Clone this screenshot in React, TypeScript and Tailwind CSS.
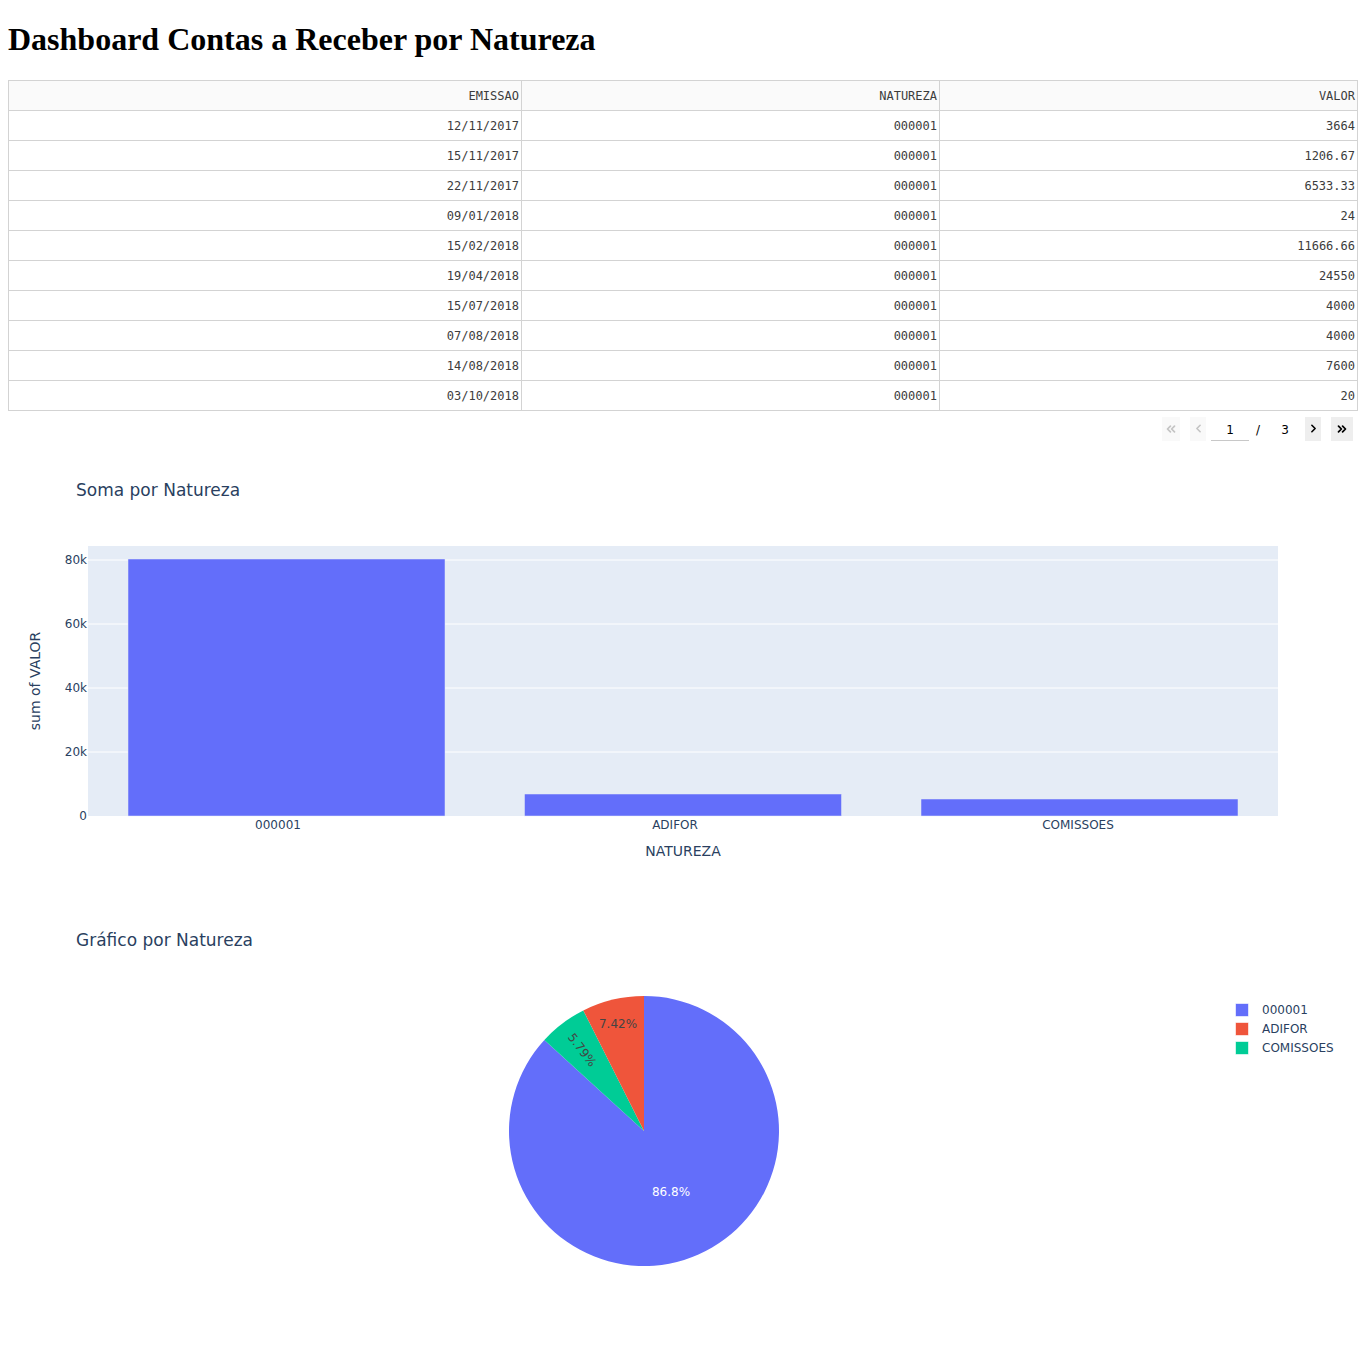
import { ChevronLeft, ChevronRight, ChevronsLeft, ChevronsRight } from 'lucide-react';

const rows = [
  ['12/11/2017', '000001', '3664'],
  ['15/11/2017', '000001', '1206.67'],
  ['22/11/2017', '000001', '6533.33'],
  ['09/01/2018', '000001', '24'],
  ['15/02/2018', '000001', '11666.66'],
  ['19/04/2018', '000001', '24550'],
  ['15/07/2018', '000001', '4000'],
  ['07/08/2018', '000001', '4000'],
  ['14/08/2018', '000001', '7600'],
  ['03/10/2018', '000001', '20'],
];

const plotFont = { fontFamily: '"DejaVu Sans", Verdana, Arial, sans-serif' };

function DataTable() {
  const cell = 'h-[30px] border border-[#d3d3d3] px-[2px] text-right align-middle';
  return (
    <table className="w-full border-collapse font-['DejaVu_Sans_Mono',monospace] text-[12px] text-[#3c3c3c]">
      <thead>
        <tr className="bg-[#fafafa]">
          <th className={`${cell} w-[513px] font-normal`}>EMISSAO</th>
          <th className={`${cell} w-[418px] font-normal`}>NATUREZA</th>
          <th className={`${cell} font-normal`}>VALOR</th>
        </tr>
      </thead>
      <tbody>
        {rows.map((r) => (
          <tr key={r[0] + r[2]}>
            <td className={cell}>{r[0]}</td>
            <td className={cell}>{r[1]}</td>
            <td className={cell}>{r[2]}</td>
          </tr>
        ))}
      </tbody>
    </table>
  );
}

function Pager() {
  return (
    <div className="flex h-[35px] items-center justify-end pr-[5px] font-['DejaVu_Sans',sans-serif] text-[12px]">
      <button className="flex h-[24px] w-[18px] items-center justify-center bg-[#f9f9f9] text-[#c4c4c4]">
        <ChevronsLeft size={14} strokeWidth={3} />
      </button>
      <button className="ml-[10px] flex h-[24px] w-[16px] items-center justify-center bg-[#f9f9f9] text-[#c4c4c4]">
        <ChevronLeft size={13} strokeWidth={3} />
      </button>
      <div className="ml-[5px] flex h-[24px] w-[38px] items-center justify-center border-b border-[#c8c8c8] pt-[3px] text-black">1</div>
      <span className="ml-[4px] w-[10px] pt-[3px] text-center text-black">/</span>
      <span className="ml-[17px] w-[10px] pt-[3px] text-center text-black">3</span>
      <button className="ml-[15px] flex h-[24px] w-[16px] items-center justify-center bg-[#eeeeee] text-black">
        <ChevronRight size={13} strokeWidth={3} />
      </button>
      <button className="ml-[10px] flex h-[24px] w-[22px] items-center justify-center bg-[#eeeeee] text-black">
        <ChevronsRight size={14} strokeWidth={3} />
      </button>
    </div>
  );
}

function BarChart() {
  const ticks = [
    { y: 114, label: '80k' },
    { y: 178, label: '60k' },
    { y: 242, label: '40k' },
    { y: 306, label: '20k' },
    { y: 370, label: '0' },
  ];
  const bars = [
    { x: 120, top: 113, label: '000001' },
    { x: 516.5, top: 348, label: 'ADIFOR' },
    { x: 913, top: 353, label: 'COMISSOES' },
  ];
  return (
    <div className="h-[450px] w-full">
      <svg width="1350" height="450" viewBox="0 0 1350 450" style={plotFont}>
        <text x="68" y="50" fontSize="17" fill="#2a3f5f">Soma por Natureza</text>
        <rect x="80" y="100" width="1190" height="270" fill="#e5ecf6" />
        {ticks.slice(0, 4).map((t) => (
          <line key={t.label} x1="80" x2="1270" y1={t.y} y2={t.y} stroke="#fff" strokeWidth="1" />
        ))}
        {bars.map((b) => (
          <rect key={b.label} x={b.x} y={b.top} width="317" height={370 - b.top} fill="#636efa" stroke="#e5ecf6" strokeWidth="0.5" />
        ))}
        {ticks.map((t) => (
          <text key={t.label} x="79" y={t.y + 4} fontSize="12" fill="#2a3f5f" textAnchor="end">{t.label}</text>
        ))}
        <text x="270" y="383" fontSize="12" fill="#2a3f5f" textAnchor="middle">000001</text>
        <text x="667" y="383" fontSize="12" fill="#2a3f5f" textAnchor="middle">ADIFOR</text>
        <text x="1070" y="383" fontSize="12" fill="#2a3f5f" textAnchor="middle">COMISSOES</text>
        <text x="675" y="410" fontSize="14" fill="#2a3f5f" textAnchor="middle">NATUREZA</text>
        <text x="32" y="235" fontSize="14" fill="#2a3f5f" textAnchor="middle" transform="rotate(-90 32 235)">sum of VALOR</text>
      </svg>
    </div>
  );
}

function PieChart() {
  const legend = [
    { color: '#636efa', label: '000001' },
    { color: '#ef553b', label: 'ADIFOR' },
    { color: '#00cc96', label: 'COMISSOES' },
  ];
  return (
    <div className="h-[450px] w-full">
      <svg width="1350" height="450" viewBox="0 0 1350 450" style={plotFont}>
        <text x="68" y="50" fontSize="17" fill="#2a3f5f">Gráfico por Natureza</text>
        <path d="M636,235 L636,100 A135,135 0 1,1 536.37,143.9 Z" fill="#636efa" />
        <path d="M636,235 L536.37,143.9 A135,135 0 0,1 575.32,114.4 Z" fill="#00cc96" />
        <path d="M636,235 L575.32,114.4 A135,135 0 0,1 636,100 Z" fill="#ef553b" />
        <text x="610" y="132" fontSize="12" fill="#444" textAnchor="middle">7.42%</text>
        <text x="574" y="158" fontSize="12" fill="#444" textAnchor="middle" transform="rotate(53 574 154)">5.79%</text>
        <text x="663" y="300" fontSize="12" fill="#fff" textAnchor="middle">86.8%</text>
        {legend.map((l, i) => (
          <g key={l.label}>
            <rect x="1228" y={108 + i * 19} width="12" height="12" fill={l.color} stroke={l.color} strokeOpacity="0.4" />
            <text x="1254" y={118 + i * 19} fontSize="12" fill="#2a3f5f">{l.label}</text>
          </g>
        ))}
      </svg>
    </div>
  );
}

export default function App() {
  return (
    <div className="bg-white px-2 pt-[21px]">
      <h1 className="h-[37px] font-['Liberation_Serif',serif] text-[32px] font-bold leading-[37px] text-black">
        Dashboard Contas a Receber por Natureza
      </h1>
      <div className="mt-[22px]">
        <DataTable />
      </div>
      <Pager />
      <BarChart />
      <PieChart />
    </div>
  );
}
